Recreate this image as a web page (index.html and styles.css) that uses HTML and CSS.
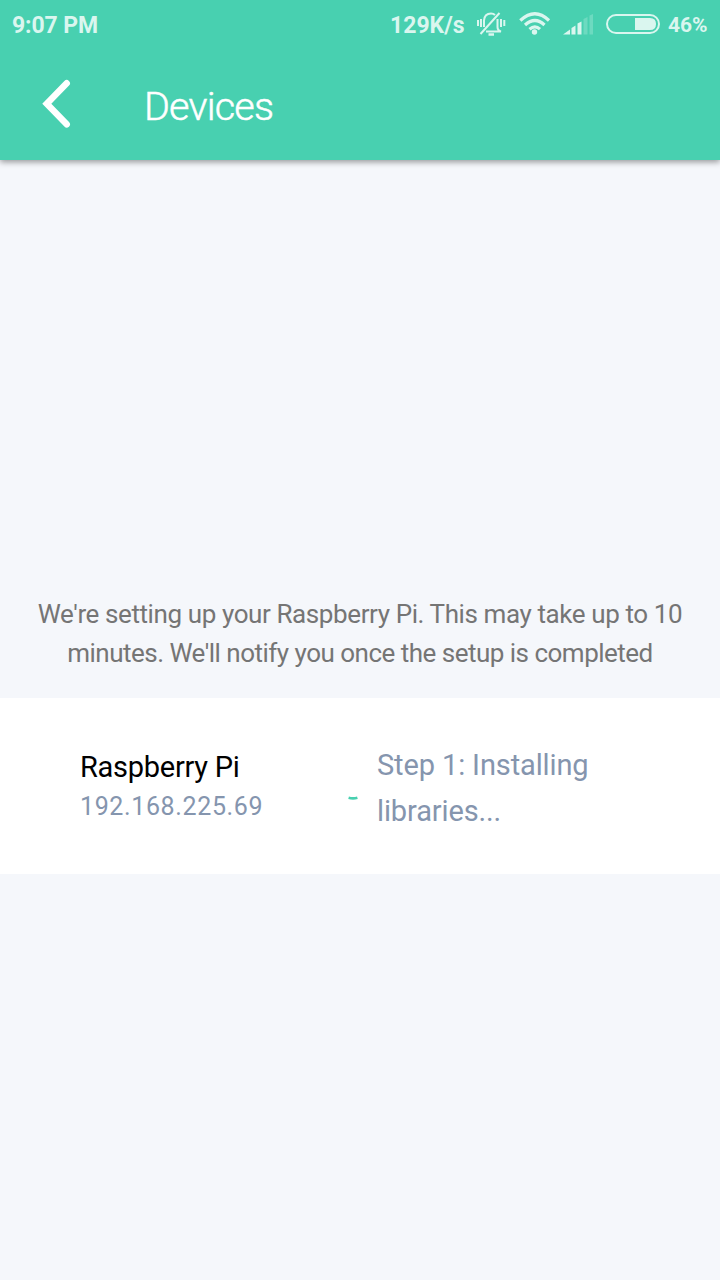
FILE: index.html
```html
<!DOCTYPE html>
<html lang="en">
<head>
<meta charset="utf-8">
<title>Devices</title>
<link rel="stylesheet" href="styles.css">
</head>
<body>
<header class="header">
  <div class="status">
    <span class="time">9:07 PM</span>
    <span class="speed">129K/s</span>
    <svg class="bell" width="30" height="28" viewBox="0 0 30 28" fill="none" stroke="currentColor" stroke-width="2">
      <path d="M8 17V10.500Q8.500 3.500 15 3.500Q17.500 3.500 19 5M21.500 9V17Q21.500 20.500 25 21.500H10M4.500 24L23.500 3"/>
      <path d="M12.500 24.500H18" stroke-width="2.500"/>
      <path d="M2 10V16M5 9V17M25 9V17M28.300 10V16"/>
    </svg>
    <svg class="wifi" width="32" height="24" viewBox="0 0 32 24" fill="none" stroke="currentColor" stroke-width="3.200">
      <path d="M1.300 8.500Q16-5 30 8.500M6 13Q16 4 25.500 13M10.500 17.200Q16 12.500 21 17.200"/>
      <circle cx="15.500" cy="20" r="2.700" fill="currentColor" stroke="none"/>
    </svg>
    <svg class="signal" width="30" height="21" viewBox="0 0 30 21" fill="currentColor">
      <path d="M0 20.500L7 15.500V20.500ZM8.500 14L12.500 11.500V20.500H8.500ZM14.500 9.500L18.500 7.500V20.500H14.500Z"/>
      <path opacity=".25" d="M20.500 5L24.500 3V20.500H20.500ZM26.500 1.500L30 0V20.500H26.500Z"/>
    </svg>
    <svg class="battery" width="54" height="20" viewBox="0 0 54 20" fill="none">
      <rect x="1" y="1" width="52" height="18" rx="9" stroke="currentColor" stroke-width="2"/>
      <path d="M29 4H44Q50 4 50 10T44 16H29Z" fill="currentColor"/>
    </svg>
    <span class="percent">46%</span>
  </div>
  <div class="bar">
    <svg class="back" width="32" height="50" viewBox="0 0 32 50" fill="none" stroke="#fff" stroke-width="6.500" stroke-linecap="round">
      <path d="M26.700 4.300L6.800 24.800L26.700 45.300"/>
    </svg>
    <h1 class="title">Devices</h1>
  </div>
</header>
<main>
  <p class="message"><span class="line1">We're setting up your Raspberry Pi. This may take up to 10</span><br><span class="line2">minutes. We'll notify you once the setup is completed</span></p>
  <section class="device">
    <div class="identity">
      <div class="name">Raspberry Pi</div>
      <div class="address">192.168.225.69</div>
    </div>
    <svg class="spinner" width="10" height="5" viewBox="0 0 10 5" fill="none" stroke="#48d0b0" stroke-width="2.700"><path d="M.6 1.700Q5 2.900 9.400 1.700"/></svg>
    <div class="step"><span class="step1">Step 1: Installing</span><br><span class="step2">libraries...</span></div>
  </section>
</main>
</body>
</html>
```
FILE: styles.css
```css
* { box-sizing: border-box; }
body { margin: 0; height: 1280px; overflow: hidden; background: #f5f7fb; font-family: Roboto, sans-serif; }
.header { height: 160px; background: #48d0b0; box-shadow: 0 2px 6px rgba(0,0,0,.4); }
.status { display: flex; height: 50px; padding-left: 12px; color: #daf6ef; font-weight: 700; font-size: 23px; line-height: 52px; white-space: nowrap; }
.time { width: 378px; letter-spacing: -.1px; }
.speed { width: 86px; }
.bell { margin-top: 10px; }
.wifi { margin: 12px 0 0 13px; }
.signal { margin: 14px 0 0 12px; }
.battery { margin: 14px 0 0 13px; }
.percent { margin-left: 8px; font-size: 21px; line-height: 50px; }
.bar { display: flex; padding: 29px 0 0 40px; }
.title { margin: 1px 0 0 72px; color: #fff; font-weight: 300; font-size: 39.500px; line-height: 54px; letter-spacing: -.8px; -webkit-text-stroke: .5px #fff; }
.message { margin: 435px 0 0; height: 103px; text-align: center; color: #757575; font-size: 26px; line-height: 39px; white-space: nowrap; }
.line1 { letter-spacing: -.4px; }
.line2 { letter-spacing: -.51px; }
.device { display: flex; height: 176px; background: #fff; padding-left: 80px; white-space: nowrap; }
.identity { width: 268px; padding-top: 49px; }
.name { font-size: 29px; line-height: 40px; letter-spacing: -.27px; color: #000; }
.address { font-size: 25px; line-height: 40px; letter-spacing: .63px; color: #8595ae; }
.spinner { margin-top: 98px; }
.step { margin-left: 19px; padding-top: 44px; font-size: 29px; line-height: 46px; letter-spacing: -.12px; color: #8595ae; }
```
